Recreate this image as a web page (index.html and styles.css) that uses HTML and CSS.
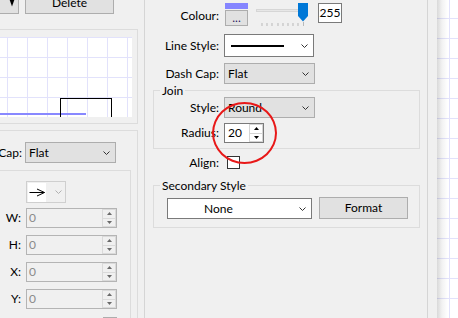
FILE: index.html
```html
<!DOCTYPE html>
<html lang="en">
<head>
<meta charset="utf-8">
<title>Line format</title>
<link rel="stylesheet" href="styles.css">
</head>
<body>
<div class="screen">
  <div class="back">
    <div class="toolbar">
      <div class="btn btn-arrow"><svg class="tri" width="6" height="9" viewBox="0 0 6 9"><polygon points="0,0 6,0 3,8.5"/></svg></div>
      <div class="btn btn-delete">Delete</div>
    </div>
    <div class="group g1">
      <div class="canvas">
        <div class="shape-line"></div>
        <div class="shape-rect"></div>
      </div>
    </div>
    <div class="group g2">
      <div class="brow">
        <span class="blabel">Dash Cap:</span>
        <div class="combo combo-gray combo-cap"><span>Flat</span><svg class="chev" width="7" height="4" viewBox="0 0 7 4"><polyline points="0.5,0.5 3.5,3.5 6.5,0.5"/></svg></div>
      </div>
      <div class="group g3">
        <div class="frow">
          <span class="flabel"></span>
          <div class="arrow-combo">
            <div class="arrow-prev"><svg width="18" height="19" viewBox="0 0 18 19"><path d="M1.5 9.5H16.5M9 6L16.5 9.5L9 13" fill="none" stroke="#000" stroke-width="1"/></svg></div>
            <svg class="chev" width="7" height="4" viewBox="0 0 7 4"><polyline points="0.5,0.5 3.5,3.5 6.5,0.5"/></svg>
          </div>
        </div>
        <div class="frow frow-w">
          <span class="flabel">W:</span>
          <div class="spin spin-off"><span class="spin-val">0</span><div class="spin-btns"><div class="sb"><svg width="5" height="3" viewBox="0 0 5 3"><polygon points="0,3 5,3 2.5,0"/></svg></div><div class="sb"><svg width="5" height="3" viewBox="0 0 5 3"><polygon points="0,0 5,0 2.5,3"/></svg></div></div></div>
        </div>
        <div class="frow frow-n">
          <span class="flabel">H:</span>
          <div class="spin spin-off"><span class="spin-val">0</span><div class="spin-btns"><div class="sb"><svg width="5" height="3" viewBox="0 0 5 3"><polygon points="0,3 5,3 2.5,0"/></svg></div><div class="sb"><svg width="5" height="3" viewBox="0 0 5 3"><polygon points="0,0 5,0 2.5,3"/></svg></div></div></div>
        </div>
        <div class="frow frow-n">
          <span class="flabel">X:</span>
          <div class="spin spin-off"><span class="spin-val">0</span><div class="spin-btns"><div class="sb"><svg width="5" height="3" viewBox="0 0 5 3"><polygon points="0,3 5,3 2.5,0"/></svg></div><div class="sb"><svg width="5" height="3" viewBox="0 0 5 3"><polygon points="0,0 5,0 2.5,3"/></svg></div></div></div>
        </div>
        <div class="frow frow-n">
          <span class="flabel">Y:</span>
          <div class="spin spin-off"><span class="spin-val">0</span><div class="spin-btns"><div class="sb"><svg width="5" height="3" viewBox="0 0 5 3"><polygon points="0,3 5,3 2.5,0"/></svg></div><div class="sb"><svg width="5" height="3" viewBox="0 0 5 3"><polygon points="0,0 5,0 2.5,3"/></svg></div></div></div>
        </div>
        <div class="frow frow-last">
          <span class="flabel"></span>
          <div class="mini"></div>
        </div>
      </div>
    </div>
  </div>

  <div class="dialog">
    <div class="panel">
      <div class="row row-colour">
        <span class="lbl">Colour:</span>
        <div class="colour-col">
          <div class="swatch"></div>
          <div class="dots-btn">...</div>
        </div>
        <svg class="slider" width="53" height="24" viewBox="0 0 53 24">
          <rect x="0.5" y="6.5" width="46" height="2" fill="#e7e7e7" stroke="#d6d6d6"/>
          <g stroke="#b9b9b9" stroke-width="1">
            <line x1="6" y1="20" x2="6" y2="23"/>
            <line x1="11" y1="20" x2="11" y2="23"/>
            <line x1="16" y1="20" x2="16" y2="23"/>
            <line x1="22" y1="20" x2="22" y2="23"/>
            <line x1="27" y1="20" x2="27" y2="23"/>
            <line x1="32" y1="20" x2="32" y2="23"/>
            <line x1="37" y1="20" x2="37" y2="23"/>
            <line x1="42" y1="20" x2="42" y2="23"/>
            <line x1="47.5" y1="19" x2="47.5" y2="23"/>
          </g>
          <polygon points="42,0 52,0 52,13 47,18.5 42,13" fill="#0078d7"/>
        </svg>
        <div class="valbox">255</div>
      </div>

      <div class="row row-ls">
        <span class="lbl">Line Style:</span>
        <div class="combo combo-white combo-ls"><span class="ls-line"></span><svg class="chev" width="7" height="4" viewBox="0 0 7 4"><polyline points="0.5,0.5 3.5,3.5 6.5,0.5"/></svg></div>
      </div>

      <div class="row row-dc">
        <span class="lbl">Dash Cap:</span>
        <div class="combo combo-gray combo-dc"><span>Flat</span><svg class="chev" width="7" height="4" viewBox="0 0 7 4"><polyline points="0.5,0.5 3.5,3.5 6.5,0.5"/></svg></div>
      </div>

      <fieldset class="fs fs-join">
        <legend>Join</legend>
        <div class="row row-style">
          <span class="lbl">Style:</span>
          <div class="combo combo-gray combo-dc"><span>Round</span><svg class="chev" width="7" height="4" viewBox="0 0 7 4"><polyline points="0.5,0.5 3.5,3.5 6.5,0.5"/></svg></div>
        </div>
        <div class="row row-radius">
          <span class="lbl">Radius:</span>
          <div class="spin spin-radius"><span class="spin-val">20</span><div class="spin-btns"><div class="sb"><svg width="5" height="3" viewBox="0 0 5 3"><polygon points="0,3 5,3 2.5,0"/></svg></div><div class="sb"><svg width="5" height="3" viewBox="0 0 5 3"><polygon points="0,0 5,0 2.5,3"/></svg></div></div></div>
        </div>
      </fieldset>

      <div class="row row-align">
        <span class="lbl">Align:</span>
        <div class="check"></div>
      </div>

      <fieldset class="fs fs-sec">
        <legend>Secondary Style</legend>
        <div class="sec-row">
          <div class="combo combo-white combo-none"><span>None</span><svg class="chev" width="7" height="4" viewBox="0 0 7 4"><polyline points="0.5,0.5 3.5,3.5 6.5,0.5"/></svg></div>
          <div class="btn btn-format">Format</div>
        </div>
      </fieldset>

      <div class="annot"></div>
    </div>
  </div>

  <div class="desk"></div>
</div>
</body>
</html>
```

FILE: styles.css
```css
* { box-sizing: border-box; }
html, body { margin: 0; padding: 0; }
body {
  width: 458px;
  height: 318px;
  overflow: hidden;
  background: #f0f0f0;
  font-family: "Segoe UI", Lato, "Liberation Sans", sans-serif;
  font-size: 12px;
  line-height: 14px;
  color: #000;
}
.screen { display: flex; width: 458px; height: 318px; overflow: hidden; }

/* ---------- back window ---------- */
.back {
  flex: none;
  width: 144px;
  height: 318px;
  overflow: hidden;
  display: flex;
  flex-direction: column;
}
.toolbar { flex: none; display: flex; height: 22px; margin-top: -8px; }
.btn {
  display: flex;
  align-items: center;
  justify-content: center;
  background: #e1e1e1;
  border: 1px solid #adadad;
  color: #000;
  white-space: nowrap;
}
.btn-arrow {
  width: 29px;
  margin-left: -10px;
  justify-content: flex-start;
  align-items: flex-start;
  padding: 5px 0 0 18px;
}
.tri { display: block; fill: #000; }
.btn-delete { width: 89px; margin-left: 6px; }

.group { border: 1px solid #dcdcdc; }
.g1 {
  flex: none;
  width: 148px;
  height: 95px;
  margin: 15px 0 0 -10px;
  padding: 7px 5px 0 0;
}
.canvas {
  position: relative;
  height: 80px;
  overflow: hidden;
  background-color: #fff;
  background-image:
    linear-gradient(to right, #e2e2fb 1px, transparent 1px),
    linear-gradient(to bottom, #e2e2fb 1px, transparent 1px);
  background-size: 20px 20px, 20px 20px;
  background-position: 16px 0, 0 0;
}
.shape-line {
  position: absolute;
  left: 0;
  top: 76px;
  width: 95px;
  height: 2px;
  background: #8888ff;
}
.shape-rect {
  position: absolute;
  left: 69px;
  top: 61px;
  width: 52px;
  height: 30px;
  border: 1px solid #000;
}

.g2 {
  flex: none;
  width: 148px;
  height: 260px;
  margin: 6px 0 0 -10px;
  padding: 11px 0 0 0;
}
.brow { display: flex; align-items: center; height: 21px; }
.blabel {
  flex: none;
  width: 31px;
  margin-right: 3px;
  display: flex;
  justify-content: flex-end;
  white-space: nowrap;
}
.combo {
  flex: none;
  display: flex;
  align-items: center;
  height: 21px;
  padding: 0 5px 0 3px;
  white-space: nowrap;
}
.combo-gray { background: #e1e1e1; border: 1px solid #adadad; }
.combo-white { background: #fff; border: 1px solid #7a7a7a; }
.combo .chev { margin-left: auto; }
.chev { display: block; flex: none; fill: none; stroke: #333; stroke-width: 1; }
.combo-cap { width: 91px; }

.g3 {
  margin: 7px 6px 0 -5px;
  height: 170px;
  padding-top: 10px;
}
.frow { display: flex; align-items: center; }
.flabel { flex: none; width: 34px; margin-right: 5px; text-align: right; }
.frow-w { margin-top: 5px; }
.frow-n { margin-top: 7px; }
.frow-last { margin-top: 8px; }

.arrow-combo {
  flex: none;
  width: 40px;
  height: 22px;
  border: 1px solid #cfcfcf;
  background: #f0f0f0;
  display: flex;
  align-items: center;
  padding: 0 3px 0 1px;
}
.arrow-prev { width: 18px; height: 19px; background: #fff; }
.arrow-prev svg { display: block; }
.arrow-combo .chev { margin-left: auto; stroke: #b0b0b0; }

.spin {
  flex: none;
  display: flex;
  height: 20px;
  border: 1px solid #7a7a7a;
  background: #fff;
}
.spin-off { width: 91px; border-color: #b4b4b4; background: #f0f0f0; color: #8a8a8a; }
.spin-val { flex: 1; padding-left: 2px; line-height: 18px; }
.spin-btns { flex: none; width: 14px; display: flex; flex-direction: column; }
.sb {
  flex: 1;
  display: flex;
  align-items: center;
  justify-content: center;
  border: 1px solid #d4d4d4;
  background: #fff;
}
.sb + .sb { border-top: none; }
.sb svg { display: block; fill: #000; }
.spin-off .sb { background: #f0f0f0; border-color: #dadada; }
.spin-off .sb svg { fill: #6a6a6a; }
.mini { flex: none; width: 14px; height: 14px; margin-left: 77px; border: 1px solid #adadad; background: #f4f4f4; }

/* ---------- dialog ---------- */
.dialog { flex: none; width: 293px; height: 318px; padding-right: 9px; }
.panel {
  position: relative;
  height: 318px;
  border-left: 1px solid #d5d5d5;
  border-right: 1px solid #d5d5d5;
  padding-top: 3px;
  display: flex;
  flex-direction: column;
}
.row { flex: none; display: flex; align-items: center; }
.lbl { flex: none; width: 74px; text-align: right; white-space: nowrap; }

.row-colour { align-items: flex-start; height: 23px; }
.row-colour .lbl { margin-top: 6px; }
.colour-col {
  flex: none;
  width: 23px;
  margin-left: 6px;
  display: flex;
  flex-direction: column;
  gap: 1px;
}
.swatch { height: 6px; background: #8585ff; }
.dots-btn {
  height: 16px;
  display: flex;
  align-items: center;
  justify-content: center;
  background: #e1e1e1;
  border: 1px solid #adadad;
  color: #2a1a5e;
}
.slider { flex: none; display: block; margin-left: 8px; }
.valbox {
  flex: none;
  width: 24px;
  height: 20px;
  margin-left: 9px;
  border: 1px solid #7a7a7a;
  background: #fff;
  text-align: center;
  line-height: 18px;
}

.row-ls { margin-top: 8px; height: 23px; }
.combo-ls { width: 90px; height: 23px; margin-left: 5px; padding-left: 6px; }
.ls-line { display: block; width: 53px; height: 2px; background: #000; }

.row-dc { margin-top: 6px; height: 21px; }
.combo-dc { width: 91px; margin-left: 5px; }

.fs {
  flex: none;
  margin: 0 7px 0 8px;
  padding: 0;
  border: 1px solid #dcdcdc;
  min-width: 0;
}
.fs legend {
  margin-left: 6px;
  padding: 0 2px;
  font-size: 12px;
  line-height: 13px;
}
.fs .lbl { width: 65px; }
.fs-join { padding-bottom: 5px; }
.row-style { height: 21px; }
.row-radius { margin-top: 5px; height: 20px; }
.spin-radius { width: 40px; margin-left: 5px; }
.spin-radius .spin-val { padding-left: 3px; }

.row-align { margin-top: 7px; height: 13px; }
.check { flex: none; width: 13px; height: 13px; margin-left: 8px; border: 1px solid #333; background: #fff; }

.fs-sec { margin-top: 10px; }
.sec-row { display: flex; align-items: flex-start; padding: 5px 0 8px 13px; }
.combo-none { width: 145px; margin-top: 1px; padding-left: 36px; }
.btn-format { width: 89px; height: 22px; margin-left: 7px; }

.annot {
  position: absolute;
  left: 67px;
  top: 102px;
  width: 65px;
  height: 62px;
  border: 2px solid #e81818;
  border-radius: 50%;
}

/* ---------- desktop canvas on the right ---------- */
.desk {
  flex: none;
  width: 21px;
  height: 318px;
  background-color: #fff;
  background-image:
    linear-gradient(to right, rgba(0,0,0,0.15), rgba(0,0,0,0.05) 5px, rgba(0,0,0,0) 11px),
    linear-gradient(to right, transparent 12px, #e2e2fb 12px, #e2e2fb 13px, transparent 13px),
    linear-gradient(to bottom, #e2e2fb 1px, transparent 1px);
  background-size: 100% 100%, 100% 100%, 100% 20px;
  background-position: 0 0, 0 0, 0 18px;
}
```
